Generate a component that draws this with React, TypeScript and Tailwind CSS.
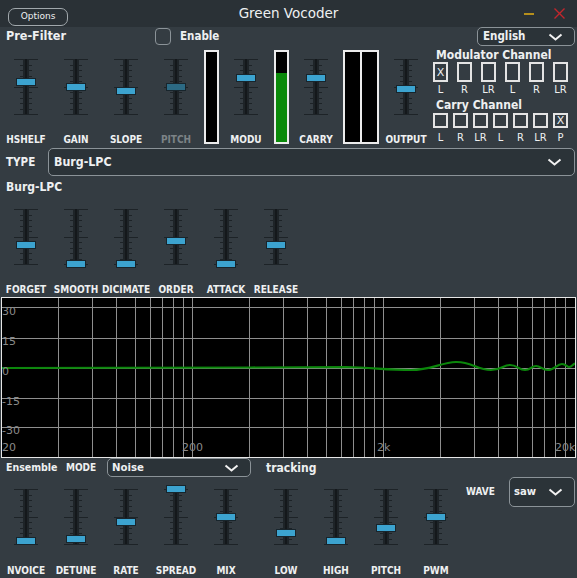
import React from 'react';

const LBL = "font-['DejaVu_Sans_Condensed','DejaVu_Sans',sans-serif] font-bold";
const SANS = "font-['DejaVu_Sans',sans-serif]";

function Chevron() {
  return (
    <svg width="15" height="8" viewBox="0 0 15 8" className="block shrink-0">
      <path d="M1.5 1.5 L7.5 6.5 L13.5 1.5" fill="none" stroke="#f2f2f2" strokeWidth="2" />
    </svg>
  );
}

// vertical fader: ticks from y=4 to y=59, pos = thumb centre offset from top tick
function Slider({ pos, dim }: { pos: number; dim?: boolean }) {
  const ticks = Array.from({ length: 11 }, (_, i) => Math.round(4 + i * 5.5) + 0.5);
  return (
    <svg width="24" height="63" viewBox="0 0 24 63" className="block">
      {ticks.map((y, i) => {
        const long = i % 5 === 0;
        return <line key={i} x1={long ? 0 : 6} x2={long ? 24 : 18} y1={y} y2={y} stroke="#1d2327" strokeWidth="1" />;
      })}
      <rect x="9" y="4" width="6" height="55" fill="#1e2428" />
      <rect x="11" y="4" width="2" height="55" fill="#14181b" />
      <rect
        x="2.5"
        y={Math.round(4 + pos - 4) + 0.5}
        width="19"
        height="7"
        fill={dim ? '#2c6a84' : '#3ca3cf'}
        stroke="#18252c"
        strokeWidth="1"
      />
    </svg>
  );
}

type Col =
  | { kind: 'slider'; w: number; label: string; pos: number; dim?: boolean }
  | { kind: 'meter'; w: number }
  | { kind: 'green'; w: number }
  | { kind: 'double'; w: number };

const topCols: Col[] = [
  { kind: 'slider', w: 50, label: 'HSHELF', pos: 23 },
  { kind: 'slider', w: 50, label: 'GAIN', pos: 28 },
  { kind: 'slider', w: 50, label: 'SLOPE', pos: 32 },
  { kind: 'slider', w: 50, label: 'PITCH', pos: 28, dim: true },
  { kind: 'meter', w: 20 },
  { kind: 'slider', w: 50, label: 'MODU', pos: 19 },
  { kind: 'green', w: 20 },
  { kind: 'slider', w: 50, label: 'CARRY', pos: 19 },
  { kind: 'double', w: 40 },
  { kind: 'slider', w: 50, label: 'OUTPUT', pos: 30 },
];

const lpc = [
  { label: 'FORGET', pos: 36 },
  { label: 'SMOOTH', pos: 55 },
  { label: 'DICIMATE', pos: 55 },
  { label: 'ORDER', pos: 32 },
  { label: 'ATTACK', pos: 55 },
  { label: 'RELEASE', pos: 36 },
];

const ensA = [
  { label: 'NVOICE', pos: 52 },
  { label: 'DETUNE', pos: 50 },
  { label: 'RATE', pos: 33 },
  { label: 'SPREAD', pos: 0 },
  { label: 'MIX', pos: 28 },
];
const ensB = [
  { label: 'LOW', pos: 44 },
  { label: 'HIGH', pos: 52 },
  { label: 'PITCH', pos: 39 },
  { label: 'PWM', pos: 28 },
];

function SliderCol({ label, pos, dim, top }: { label: string; pos: number; dim?: boolean; top: string }) {
  return (
    <div className="w-[50px] h-full flex flex-col items-center">
      <div className={top}>
        <Slider pos={pos} dim={dim} />
      </div>
      <div
        className={`${LBL} mt-auto mb-[1px] h-[13px] leading-[13px] text-[10px] whitespace-nowrap ${
          dim ? 'text-[#7c8387]' : 'text-[#eef0f1]'
        }`}
      >
        {label}
      </div>
    </div>
  );
}

function Graph() {
  const vx: number[] = [];
  for (let d = 0; d < 3; d++) {
    for (let k = 2; k <= 10; k++) {
      const x = Math.round(191 * Math.log10(k * Math.pow(10, d)));
      if (x < 572) vx.push(x + 0.5);
    }
  }
  const hy = [10, 41, 71, 101, 130];
  const curve =
    'M0 71 L250 70.5 L345 70 C372 70.5 385 73 410 73 C430 73 440 65.5 455 65 C470 64.5 476 73 490 73 C500 73 502 68 509 68 C516 68 518 73 524 73 C530 73 530 69 535 69 C540 69 541 73 547 73 C553 73 556 67 561 67 C565 67 566 70 568 70 C571 70 572 67 574 66.5';
  return (
    <svg width="575" height="161" viewBox="0 0 575 161" className="block">
      <rect x="0" y="0" width="575" height="161" fill="#000" />
      {vx.map((x, i) => (
        <line key={'v' + i} x1={x} x2={x} y1="0" y2="161" stroke="#8e8e8e" strokeWidth="1" />
      ))}
      {hy.map((y, i) => (
        <line key={'h' + i} x1="0" x2="575" y1={y + 0.5} y2={y + 0.5} stroke="#8e8e8e" strokeWidth="1" />
      ))}
      <path d={curve} fill="none" stroke="#0b870b" strokeWidth="2.2" />
      <g fill="#8a8a8a" fontFamily="DejaVu Sans, sans-serif" fontSize="11">
        <text x="1" y="18">30</text>
        <text x="1" y="48">15</text>
        <text x="1" y="78">0</text>
        <text x="1" y="108">-15</text>
        <text x="1" y="137">-30</text>
        <text x="1" y="154">20</text>
        <text x="181" y="154">200</text>
        <text x="376" y="154">2k</text>
        <text x="554" y="154">20k</text>
      </g>
      <rect x="0.5" y="0.5" width="574" height="160" fill="none" stroke="#e6e6e6" strokeWidth="1" />
    </svg>
  );
}

export default function App() {
  return (
    <div className="w-[577px] h-[578px] bg-[#343c42] text-[#eef0f1] overflow-hidden flex flex-col select-none">
      {/* Title bar */}
      <div className="h-[27px] shrink-0 bg-[#2a3136] flex items-center">
        <div className="w-[140px] pl-[8px]">
          <button
            className={`${SANS} w-[60px] h-[18px] rounded-[7px] border border-[#a1a8ac] text-[9px] leading-none text-[#eef0f1]`}
          >
            Options
          </button>
        </div>
        <div className={`${SANS} flex-1 text-center text-[13.5px] leading-none text-[#eef0f1]`}>Green Vocoder</div>
        <div className="w-[140px] flex items-center justify-end gap-[20px] pr-[12px]">
          <div className="w-[10px] h-[2px] bg-[#b58f1c]" />
          <svg width="11" height="11" viewBox="0 0 11 11" className="block">
            <path d="M0.5 0.5 L10.5 10.5 M10.5 0.5 L0.5 10.5" stroke="#c2262c" strokeWidth="1.4" />
          </svg>
        </div>
      </div>

      {/* Pre-filter section */}
      <div className="h-[120px] shrink-0 flex">
        <div className="w-[431px] flex flex-col">
          <div className="h-[19px] flex items-center">
            <span className={`${LBL} pl-[6px] w-[155px] text-[12.5px] leading-none`}>Pre-Filter</span>
            <span className="w-[16px] h-[17px] rounded-[4px] border border-[#8b9398]" />
            <span className={`${LBL} ml-[9px] text-[11.5px] leading-none`}>Enable</span>
          </div>
          <div className="h-[101px] flex pl-[1px]">
            {topCols.map((c, i) => {
              if (c.kind === 'slider')
                return <SliderCol key={i} label={c.label} pos={c.pos} dim={c.dim} top="mt-[9px]" />;
              if (c.kind === 'meter')
                return (
                  <div key={i} className="w-[20px] flex justify-center">
                    <div className="mt-[4px] w-[15px] h-[94px] border-2 border-[#ececec] bg-black" />
                  </div>
                );
              if (c.kind === 'green')
                return (
                  <div key={i} className="w-[20px] flex justify-center">
                    <div className="mt-[4px] w-[15px] h-[94px] border-2 border-[#ececec] bg-black flex flex-col justify-end">
                      <div className="h-[69px] bg-[#0a8a0a]" />
                    </div>
                  </div>
                );
              return (
                <div key={i} className="w-[40px] flex justify-center">
                  <div className="mt-[4px] flex">
                    <div className="w-[19px] h-[94px] border-2 border-[#ececec] bg-black" />
                    <div className="w-[17px] h-[94px] border-2 border-l-0 border-[#ececec] bg-black" />
                  </div>
                </div>
              );
            })}
          </div>
        </div>

        {/* Channel panel */}
        <div className="flex-1 flex flex-col pl-[2px]">
          <div className="self-end mr-[2px] w-[98px] h-[19px] rounded-[5px] border border-[#8b9398] bg-[#2b3338] flex items-center justify-between pl-[5px] pr-[11px]">
            <span className={`${LBL} text-[11.5px] leading-none`}>English</span>
            <Chevron />
          </div>
          <div className={`${LBL} pl-[3px] mt-[2px] h-[14px] text-[12px] leading-[14px]`}>Modulator Channel</div>
          <div className="flex gap-[9px]">
            {['X', '', '', '', '', ''].map((t, i) => (
              <div
                key={i}
                className={`${SANS} w-[15px] h-[20px] border-2 border-[#e4e4e4] flex items-center justify-center text-[11px] leading-none`}
              >
                {t}
              </div>
            ))}
          </div>
          <div className="flex gap-[9px] h-[13px] mt-[1px]">
            {['L', 'R', 'LR', 'L', 'R', 'LR'].map((t, i) => (
              <div key={i} className={`${LBL} font-normal w-[15px] text-center text-[11px] leading-[13px]`}>
                {t}
              </div>
            ))}
          </div>
          <div className={`${LBL} pl-[3px] mt-[2px] h-[14px] text-[12px] leading-[14px]`}>Carry Channel</div>
          <div className="flex gap-[5px] mt-[1px]">
            {['', '', '', '', '', '', 'X'].map((t, i) => (
              <div
                key={i}
                className={`${SANS} w-[15px] h-[15px] border-2 border-[#e4e4e4] flex items-center justify-center text-[11px] leading-none`}
              >
                {t}
              </div>
            ))}
          </div>
          <div className="flex gap-[5px] h-[13px] mt-[3px]">
            {['L', 'R', 'LR', 'L', 'R', 'LR', 'P'].map((t, i) => (
              <div key={i} className={`${LBL} font-normal w-[15px] text-center text-[11px] leading-[13px]`}>
                {t}
              </div>
            ))}
          </div>
        </div>
      </div>

      {/* Type */}
      <div className="h-[30px] shrink-0 flex items-center">
        <span className={`${LBL} pl-[6px] w-[48px] text-[11.5px] leading-none mt-[2px]`}>TYPE</span>
        <div className="flex-1 mr-[2px] h-[28px] rounded-[5px] border border-[#8b9398] bg-[#2b3338] flex items-center justify-between pl-[5px] pr-[12px]">
          <span className={`${LBL} text-[12.3px] leading-none`}>Burg-LPC</span>
          <Chevron />
        </div>
      </div>

      <div className="h-[18px] shrink-0 flex items-center pt-[2px]">
        <span className={`${LBL} pl-[6px] text-[12px] leading-none`}>Burg-LPC</span>
      </div>

      {/* LPC sliders */}
      <div className="h-[102px] shrink-0 flex pl-[1px]">
        {lpc.map((s) => (
          <SliderCol key={s.label} label={s.label} pos={s.pos} top="mt-[10px]" />
        ))}
      </div>

      {/* Response graph */}
      <div className="h-[161px] shrink-0 pl-[1px]">
        <Graph />
      </div>

      {/* Ensemble */}
      <div className="h-[19px] shrink-0 flex items-center">
        <span className={`${LBL} pl-[6px] w-[66px] text-[10.5px] leading-none whitespace-nowrap`}>Ensemble</span>
        <span className={`${LBL} w-[41px] text-[10px] leading-none`}>MODE</span>
        <div className="w-[144px] h-[19px] rounded-[5px] border border-[#8b9398] bg-[#2b3338] flex items-center justify-between pl-[4px] pr-[11px]">
          <span className={`${LBL} text-[11.3px] leading-none`}>Noise</span>
          <Chevron />
        </div>
        <span className={`${LBL} ml-[15px] text-[12px] leading-none`}>tracking</span>
      </div>

      <div className="flex-1 flex pl-[1px]">
        {ensA.map((s) => (
          <SliderCol key={s.label} label={s.label} pos={s.pos} top="mt-[8px]" />
        ))}
        <div className="w-[10px]" />
        {ensB.map((s) => (
          <SliderCol key={s.label} label={s.label} pos={s.pos} top="mt-[8px]" />
        ))}
        <div className="ml-[5px] h-[30px] flex items-center flex-1">
          <span className={`${LBL} text-[10px] leading-none`}>WAVE</span>
          <div className="ml-auto mr-[2px] w-[66px] h-[30px] rounded-[5px] border border-[#8b9398] bg-[#2b3338] flex items-center justify-between pl-[4px] pr-[11px]">
            <span className={`${LBL} text-[11.2px] leading-none`}>saw</span>
            <Chevron />
          </div>
        </div>
      </div>
    </div>
  );
}
